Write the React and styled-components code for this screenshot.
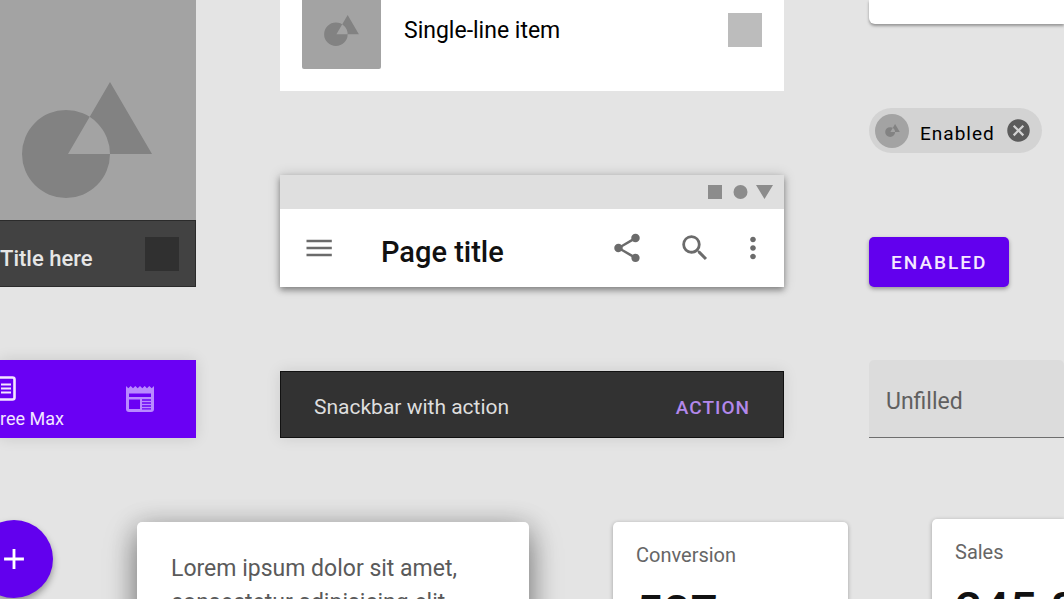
import React from "react";
import styled, { createGlobalStyle } from "styled-components";
import { MdAdd, MdCancel, MdMoreVert, MdSearch, MdShare } from "react-icons/md";

const GlobalStyle = createGlobalStyle`
  *, *::before, *::after { box-sizing: border-box; }
  body {
    margin: 0;
    background: #e4e4e4;
    font-family: Roboto, "Liberation Sans", sans-serif;
    color: #000;
  }
  button, input { font: inherit; border: 0; margin: 0; padding: 0; }
  button { cursor: pointer; color: inherit; background: none; }
  svg { display: block; flex: none; }
`;

const Page = styled.main`
  height: 100vh;
  overflow: hidden;
`;

const Showcase = styled.section`
  display: grid;
  grid-template-columns: 280px minmax(0, 1fr) 280px;
`;

const Column = styled.div`
  display: flex;
  flex-direction: column;
  align-items: ${(p) => p.$align || "stretch"};
  padding-left: ${(p) => p.$left || 0}px;
  padding-right: ${(p) => p.$right || 0}px;
`;

/* Media tile */
const MediaTile = styled.figure`
  margin: 0 0 73px;
`;

const Media = styled.div`
  display: flex;
  align-items: flex-end;
  height: 220px;
  padding: 0 22px 22px;
  background: #a3a3a3;
`;

const MediaBar = styled.figcaption`
  display: flex;
  align-items: center;
  justify-content: space-between;
  height: 67px;
  padding: 0 16px 0 0;
  background: #424242;
  border: 1px solid #2b2b2b;
  border-left: 0;
  color: #e6e6e6;
  font-size: 22px;
  font-weight: 500;
  line-height: 32px;
`;

const MediaTitle = styled.span`
  padding-top: 10px;
`;

const Swatch = styled.span`
  flex: none;
  width: 34px;
  height: 34px;
  background: ${(p) => p.$color};
`;

/* Bottom navigation */
const BottomNav = styled.nav`
  display: flex;
  justify-content: space-between;
  height: 78px;
  padding-right: 42px;
  background: #6a00f4;
  box-shadow: 0 0 14px rgba(0, 0, 0, 0.12);
`;

const NavButton = styled.button`
  display: flex;
  flex-direction: column;
  align-items: flex-start;
  justify-content: ${(p) => (p.$labelled ? "flex-end" : "center")};
  padding-bottom: ${(p) => (p.$labelled ? 7 : 0)}px;
  color: ${(p) => (p.$labelled ? "#f3e6ff" : "#b98aff")};
  font-size: 18px;
  line-height: 24px;
  gap: 6px;
`;

/* List item */
const ListItem = styled.div`
  display: flex;
  align-items: center;
  height: 91px;
  margin-bottom: 84px;
  padding: 0 22px 31px;
  background: #fff;
  font-size: 23px;
  line-height: 32px;
`;

const Thumb = styled.div`
  display: flex;
  flex: none;
  align-items: center;
  justify-content: center;
  width: 79px;
  height: 78px;
  margin-right: 23px;
  border-radius: 2px;
  background: #a3a3a3;
`;

const ItemText = styled.span`
  flex: 1;
  min-width: 0;
  padding-top: 2px;
`;

/* App bar */
const AppBar = styled.header`
  margin-bottom: 84px;
  background: #fff;
  box-shadow: 0 3px 6px rgba(0, 0, 0, 0.38), 0 0 12px rgba(0, 0, 0, 0.16);
`;

const StatusBar = styled.div`
  display: flex;
  align-items: center;
  justify-content: flex-end;
  height: 34px;
  padding-right: 11px;
  background: #dfdfdf;
`;

const Toolbar = styled.div`
  display: flex;
  align-items: center;
  height: 78px;
  padding: 0 14px 0 22px;
  color: #6b6b6b;
`;

const PageTitle = styled.h1`
  flex: 1;
  margin: 0;
  padding: 8px 0 0 45px;
  color: #111;
  font-size: 29px;
  font-weight: 500;
  line-height: 32px;
`;

const IconButton = styled.button`
  display: flex;
  flex: none;
  align-items: center;
  justify-content: center;
  margin-right: ${(p) => p.$gap || 0}px;
`;

/* Snackbar */
const Snackbar = styled.div`
  display: flex;
  align-items: center;
  height: 67px;
  padding: 4px 33px 0;
  background: #323232;
  border: 1px solid #111;
  box-shadow: 0 0 14px rgba(0, 0, 0, 0.1);
  color: #dedede;
`;

const SnackbarText = styled.span`
  flex: 1;
  min-width: 0;
  font-size: 21px;
  line-height: 24px;
`;

const TextButton = styled.button`
  padding-top: 2px;
  color: #b388eb;
  font-size: 19px;
  font-weight: 500;
  line-height: 24px;
  letter-spacing: 1px;
`;

/* Right-hand components */
const CardEdge = styled.div`
  align-self: stretch;
  height: 24px;
  margin-bottom: 84px;
  border-radius: 0 0 0 6px;
  background: #fff;
  box-shadow: 0 2px 3px rgba(0, 0, 0, 0.35);
`;

const Chip = styled.div`
  display: flex;
  align-items: center;
  height: 45px;
  margin-bottom: 84px;
  padding: 0 10px 0 6px;
  border-radius: 24px;
  background: #d3d3d3;
  font-size: 19px;
  line-height: 24px;
`;

const Avatar = styled.span`
  display: flex;
  align-items: center;
  justify-content: center;
  width: 34px;
  height: 34px;
  border-radius: 50%;
  background: #a3a3a3;
`;

const ChipLabel = styled.span`
  padding: 6px 10px 0 11px;
  letter-spacing: 1px;
`;

const ContainedButton = styled.button`
  height: 50px;
  margin-bottom: 73px;
  padding: 0 22px;
  border-radius: 5px;
  background: #6200ee;
  box-shadow: 0 2px 4px rgba(0, 0, 0, 0.35);
  color: #f6e8ff;
  font-size: 19px;
  font-weight: 500;
  letter-spacing: 2px;
`;

const TextField = styled.input`
  width: 100%;
  height: 78px;
  padding: 6px 17px 0;
  border-bottom: 1px solid #6e6e6e;
  border-radius: 5px 5px 0 0;
  background: #dcdcdc;
  font-size: 23px;
  &::placeholder { color: #606060; opacity: 1; }
`;

/* Bottom row */
const CardRow = styled.section`
  display: flex;
  align-items: flex-start;
  gap: 84px;
  margin-top: 81px;
`;

const Fab = styled.button`
  display: flex;
  flex: none;
  align-items: center;
  justify-content: center;
  width: 78px;
  height: 78px;
  margin: 1px 0 0 -25px;
  border-radius: 50%;
  background: #6200ee;
  box-shadow: 0 4px 7px rgba(0, 0, 0, 0.35);
  color: #fff;
`;

const Dialog = styled.article`
  flex: 1;
  min-width: 0;
  height: 260px;
  margin-top: 3px;
  padding: 30px 34px;
  border-radius: 5px;
  background: #fff;
  box-shadow: 0 14px 32px rgba(0, 0, 0, 0.4), 0 2px 26px rgba(0, 0, 0, 0.2);
  color: #5a5a5a;
  font-size: 23px;
  line-height: 34px;
`;

const Paragraph = styled.p`
  margin: 0;
`;

const StatCard = styled.article`
  flex: none;
  width: ${(p) => p.$width}px;
  height: 180px;
  margin-top: ${(p) => p.$top}px;
  padding: 21px 0 0 23px;
  border-radius: ${(p) => (p.$bleed ? "5px 0 0 5px" : "5px")};
  background: #fff;
  box-shadow: 0 1px 4px rgba(0, 0, 0, 0.3);
  white-space: nowrap;
`;

const StatLabel = styled.h2`
  margin: 0;
  color: #666;
  font-size: 20px;
  font-weight: 400;
  line-height: 24px;
`;

const StatValue = styled.p`
  margin: 18px 0 0;
  color: #111;
  font-size: 48px;
  font-weight: 500;
  line-height: 56px;
`;

const Shapes = ({ width, height }) => (
  <svg width={width} height={height} viewBox="0 0 130 116" aria-hidden="true">
    <path
      fill="#828282"
      fillRule="evenodd"
      d="M44 28a44 44 0 1 0 0 88a44 44 0 1 0 0-88zM88 0L130 72H46z"
    />
  </svg>
);

const StatusGlyphs = () => (
  <svg width="65" height="14" viewBox="0 0 65 14" fill="#8c8c8c" aria-hidden="true">
    <path d="M0 0h14v14H0zM48 0h17l-8.5 14z" />
    <circle cx="32.5" cy="7" r="7" />
  </svg>
);

const MenuIcon = () => (
  <svg width="34" height="34" viewBox="0 0 34 34" aria-hidden="true">
    <path d="M4.500 10h25.300M4.500 17h25.300M4.500 24h25.300" fill="none" stroke="currentColor" strokeWidth="2.4" />
  </svg>
);

const ArticleIcon = () => (
  <svg width="16" height="25" viewBox="0 0 16 25" aria-hidden="true">
    <path d="M-6 1.5H12.500a2 2 0 0 1 2 2v18a2 2 0 0 1-2 2H-6" fill="none" stroke="currentColor" strokeWidth="2.6" />
    <path d="M1 8.500h10M1 12.500h10M1 16.500h10" fill="none" stroke="currentColor" strokeWidth="2.2" />
  </svg>
);

const NewsIcon = () => (
  <svg width="28" height="26" viewBox="0 0 28 26" aria-hidden="true">
    <path
      fill="currentColor"
      fillRule="evenodd"
      d="M0 0l2.300 2.300L4.700 0L7 2.300L9.300 0l2.400 2.300L14 0l2.300 2.300L18.700 0L21 2.300L23.300 0l2.400 2.300L28 0V23a3 3 0 0 1-3 3H3a3 3 0 0 1-3-3zM3 7.500V11H25V7.500zM3 13.500V23H14V13.500zM16 13.300v1.500h9v-1.500zM16 16.300v1.500h9v-1.500zM16 19.300v1.500h9v-1.500zM16 22.200v1.300h9v-1.300z"
    />
  </svg>
);

export default function App() {
  return (
    <Page>
      <GlobalStyle />
      <Showcase>
        <Column $right={84}>
          <MediaTile>
            <Media>
              <Shapes width={130} height={116} />
            </Media>
            <MediaBar>
              <MediaTitle>Title here</MediaTitle>
              <Swatch $color="#303030" />
            </MediaBar>
          </MediaTile>
          <BottomNav>
            <NavButton $labelled>
              <ArticleIcon />
              ree Max
            </NavButton>
            <NavButton aria-label="News">
              <NewsIcon />
            </NavButton>
          </BottomNav>
        </Column>

        <Column>
          <ListItem>
            <Thumb>
              <Shapes width={35} height={31} />
            </Thumb>
            <ItemText>Single-line item</ItemText>
            <Swatch $color="#bcbcbc" />
          </ListItem>
          <AppBar>
            <StatusBar>
              <StatusGlyphs />
            </StatusBar>
            <Toolbar>
              <IconButton aria-label="Menu"><MenuIcon /></IconButton>
              <PageTitle>Page title</PageTitle>
              <IconButton $gap={34} aria-label="Share"><MdShare size={34} /></IconButton>
              <IconButton $gap={24} aria-label="Search"><MdSearch size={34} /></IconButton>
              <IconButton aria-label="More"><MdMoreVert size={34} /></IconButton>
            </Toolbar>
          </AppBar>
          <Snackbar>
            <SnackbarText>Snackbar with action</SnackbarText>
            <TextButton>ACTION</TextButton>
          </Snackbar>
        </Column>

        <Column $left={85} $align="flex-start">
          <CardEdge />
          <Chip>
            <Avatar>
              <Shapes width={15} height={13} />
            </Avatar>
            <ChipLabel>Enabled</ChipLabel>
            <IconButton aria-label="Remove">
              <MdCancel size={27} color="#5c5c5c" />
            </IconButton>
          </Chip>
          <ContainedButton>ENABLED</ContainedButton>
          <TextField type="text" aria-label="Unfilled" placeholder="Unfilled" />
        </Column>
      </Showcase>

      <CardRow>
        <Fab aria-label="Add"><MdAdd size={34} /></Fab>
        <Dialog>
          <Paragraph>Lorem ipsum dolor sit amet, consectetur adipisicing elit,</Paragraph>
        </Dialog>
        <StatCard $width={235} $top={3}>
          <StatLabel>Conversion</StatLabel>
          <StatValue>527</StatValue>
        </StatCard>
        <StatCard $width={132} $top={0} $bleed>
          <StatLabel>Sales</StatLabel>
          <StatValue>245.8</StatValue>
        </StatCard>
      </CardRow>
    </Page>
  );
}
